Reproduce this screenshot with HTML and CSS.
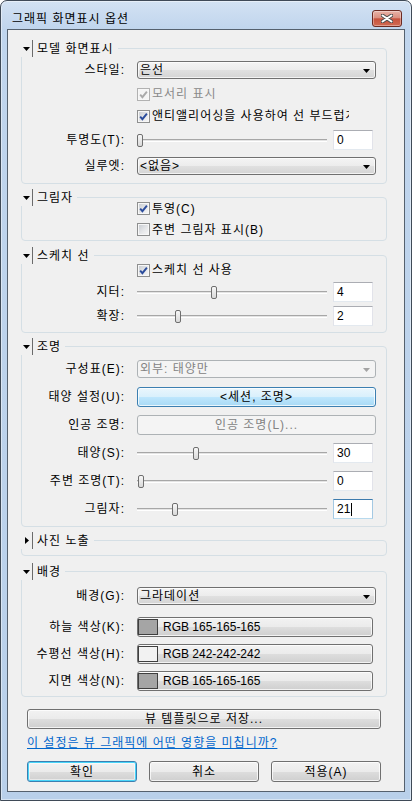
FILE: index.html
```html
<!DOCTYPE html>
<html lang="ko">
<head>
<meta charset="utf-8">
<title>그래픽 화면표시 옵션</title>
<link rel="stylesheet" href="styles.css">
</head>
<body>
<div class="window">
  <header class="titlebar">
    <span class="title">그래픽 화면표시 옵션</span>
    <span class="close"><svg width="12" height="9" viewBox="0 0 12 9"><path class="xo" d="M1.5 1.5L10.5 7.5M10.5 1.5L1.5 7.5"/><path class="xi" d="M1.5 1.5L10.5 7.5M10.5 1.5L1.5 7.5"/></svg></span>
  </header>
  <main class="client">
    <section class="group g1">
      <div class="ghead"><span class="tog"><svg width="7" height="4" viewBox="0 0 7 4"><path d="M0 0H7L3.5 4Z"/></svg></span><span class="gtitle">모델 화면표시</span></div>
      <div class="gbody">
        <div class="row tall"><span class="lbl">스타일:</span><div class="combo"><span>은선</span><svg class="arrow" width="7" height="4" viewBox="0 0 7 4"><path d="M0 0H7L3.5 4Z"/></svg></div></div>
        <div class="row"><div class="chk off"><span class="box"><svg width="11" height="11" viewBox="0 0 11 11"><path d="M2.2 5.6L4.4 8.2L8.9 2.6"/></svg></span><span>모서리 표시</span></div></div>
        <div class="row"><div class="chk"><span class="box"><svg width="11" height="11" viewBox="0 0 11 11"><path d="M2.2 5.6L4.4 8.2L8.9 2.6"/></svg></span><span class="clip">앤티앨리어싱을 사용하여 선 부드럽게</span></div></div>
        <div class="row tall"><span class="lbl">투명도(T):</span><div class="slider"><div class="track"><span class="thumb" style="left:0%"></span></div><span class="num">0</span></div></div>
        <div class="row tall"><span class="lbl">실루엣:</span><div class="combo"><span>&lt;없음&gt;</span><svg class="arrow" width="7" height="4" viewBox="0 0 7 4"><path d="M0 0H7L3.5 4Z"/></svg></div></div>
      </div>
    </section>

    <section class="group g2">
      <div class="ghead"><span class="tog"><svg width="7" height="4" viewBox="0 0 7 4"><path d="M0 0H7L3.5 4Z"/></svg></span><span class="gtitle">그림자</span></div>
      <div class="gbody">
        <div class="row h21"><div class="chk"><span class="box"><svg width="11" height="11" viewBox="0 0 11 11"><path d="M2.2 5.6L4.4 8.2L8.9 2.6"/></svg></span><span>투영(C)</span></div></div>
        <div class="row h21"><div class="chk"><span class="box"></span><span>주변 그림자 표시(B)</span></div></div>
      </div>
    </section>

    <section class="group g3">
      <div class="ghead"><span class="tog"><svg width="7" height="4" viewBox="0 0 7 4"><path d="M0 0H7L3.5 4Z"/></svg></span><span class="gtitle">스케치 선</span></div>
      <div class="gbody">
        <div class="row h20"><div class="chk"><span class="box"><svg width="11" height="11" viewBox="0 0 11 11"><path d="M2.2 5.6L4.4 8.2L8.9 2.6"/></svg></span><span>스케치 선 사용</span></div></div>
        <div class="row h24"><span class="lbl">지터:</span><div class="slider"><div class="track"><span class="thumb" style="left:39%"></span></div><span class="num">4</span></div></div>
        <div class="row h24"><span class="lbl">확장:</span><div class="slider"><div class="track"><span class="thumb" style="left:20%"></span></div><span class="num">2</span></div></div>
      </div>
    </section>

    <section class="group g4">
      <div class="ghead"><span class="tog"><svg width="7" height="4" viewBox="0 0 7 4"><path d="M0 0H7L3.5 4Z"/></svg></span><span class="gtitle">조명</span></div>
      <div class="gbody">
        <div class="row h28"><span class="lbl">구성표(E):</span><div class="combo off"><span>외부: 태양만</span><svg class="arrow" width="7" height="4" viewBox="0 0 7 4"><path d="M0 0H7L3.5 4Z"/></svg></div></div>
        <div class="row h28"><span class="lbl">태양 설정(U):</span><div class="btn hot">&lt;세션, 조명&gt;</div></div>
        <div class="row h28"><span class="lbl">인공 조명:</span><div class="btn off">인공 조명(L)...</div></div>
        <div class="row h28"><span class="lbl">태양(S):</span><div class="slider"><div class="track"><span class="thumb" style="left:29.5%"></span></div><span class="num">30</span></div></div>
        <div class="row h28"><span class="lbl">주변 조명(T):</span><div class="slider"><div class="track"><span class="thumb" style="left:0.5%"></span></div><span class="num">0</span></div></div>
        <div class="row h28"><span class="lbl">그림자:</span><div class="slider"><div class="track"><span class="thumb" style="left:18.3%"></span></div><span class="num focus">21<span class="caret"></span></span></div></div>
      </div>
    </section>

    <section class="group g5">
      <div class="ghead"><span class="tog"><svg width="4" height="7" viewBox="0 0 4 7"><path d="M0 0L4 3.5L0 7Z"/></svg></span><span class="gtitle">사진 노출</span></div>
      <div class="gbody"></div>
    </section>

    <section class="group g6">
      <div class="ghead"><span class="tog"><svg width="7" height="4" viewBox="0 0 7 4"><path d="M0 0H7L3.5 4Z"/></svg></span><span class="gtitle">배경</span></div>
      <div class="gbody">
        <div class="row tall"><span class="lbl">배경(G):</span><div class="combo"><span>그라데이션</span><svg class="arrow" width="7" height="4" viewBox="0 0 7 4"><path d="M0 0H7L3.5 4Z"/></svg></div></div>
        <div class="colors">
          <div class="row h27"><span class="lbl">하늘 색상(K):</span><div class="btn color"><span class="swatch" style="background:rgb(165,165,165)"></span><span class="rgb">RGB 165-165-165</span></div></div>
          <div class="row h27"><span class="lbl">수평선 색상(H):</span><div class="btn color"><span class="swatch" style="background:rgb(242,242,242)"></span><span class="rgb">RGB 242-242-242</span></div></div>
          <div class="row h27"><span class="lbl">지면 색상(N):</span><div class="btn color"><span class="swatch" style="background:rgb(165,165,165)"></span><span class="rgb">RGB 165-165-165</span></div></div>
        </div>
      </div>
    </section>

    <div class="btn save">뷰 템플릿으로 저장...</div>
    <div class="linkrow"><a class="link" href="#">이 설정은 뷰 그래픽에 어떤 영향을 미칩니까?</a></div>
    <div class="actions">
      <div class="btn def">확인</div>
      <div class="btn">취소</div>
      <div class="btn">적용(A)</div>
    </div>
  </main>
</div>
</body>
</html>
```

FILE: styles.css
```css
* { box-sizing: border-box; }
html, body { margin: 0; padding: 0; background: #fff; }
body {
  width: 412px;
  height: 801px;
  overflow: hidden;
  font: 12px/14px "Liberation Sans", "Noto Sans CJK KR", sans-serif;
  letter-spacing: 1px;
  color: #000;
}

.window {
  width: 412px;
  height: 801px;
  border: 1px solid #3f4a57;
  border-radius: 7px 7px 0 0;
  background: linear-gradient(180deg, #d3e2f3 0px, #c0d5ed 28px, #b9d0ea 100%);
  box-shadow: inset 0 0 0 1px rgba(255,255,255,0.45);
  padding: 0 6px 8px 6px;
  display: flex;
  flex-direction: column;
}

.titlebar {
  height: 28px;
  flex: none;
  display: flex;
  align-items: flex-start;
  padding: 9px 3px 0 5px;
}
.title { line-height: 18px; }
.close {
  margin-left: auto;
  width: 30px;
  height: 17px;
  border: 1px solid #6b2a22;
  border-radius: 3px;
  background: linear-gradient(180deg, #e8b3a8 0%, #db8f80 46%, #c6523d 52%, #d06a52 100%);
  box-shadow: inset 0 0 0 1px rgba(255,255,255,0.35);
  display: flex;
  align-items: center;
  justify-content: center;
}
.close svg { display: block; }
.close .xo { stroke: #4d4d4d; stroke-width: 3.8; stroke-linecap: round; fill: none; }
.close .xi { stroke: #fff; stroke-width: 2; stroke-linecap: round; fill: none; }

.client {
  flex: 1;
  background: #f0f0f0;
  border: 1px solid #55616e;
  padding: 18px 17px 0 13px;
  display: flex;
  flex-direction: column;
}

/* group boxes */
.group {
  border: 1px solid #d5dfe5;
  border-radius: 4px;
  padding: 0 10px 0 0;
  display: flex;
  flex-direction: column;
}
.group + .group { margin-top: 13px; }
.group.g3 { margin-top: 14px; }
.group.g6 { margin-top: 15px; }

.ghead {
  align-self: flex-start;
  height: 17px;
  margin: -9px 0 -8px -1px;
  background: #f0f0f0;
  display: flex;
  align-items: center;
  padding-right: 4px;
}
.tog {
  width: 12px;
  height: 17px;
  border-right: 1px solid #6b6b6b;
  display: flex;
  align-items: center;
  justify-content: center;
}
.tog svg { display: block; fill: #000; }
.gtitle { padding-left: 4px; white-space: nowrap; }

.gbody { display: flex; flex-direction: column; }
.g1 .gbody { padding: 8px 0 4px; }
.g2 .gbody { padding: 0; }
.g3 .gbody { padding: 4px 0 4px; }
.g4 .gbody { padding: 8px 0 3px; }
.g5 .gbody { height: 14px; }
.g6 .gbody { padding: 11px 0 2px; }
.colors { margin-top: 4px; display: flex; flex-direction: column; }

/* rows */
.row {
  display: grid;
  grid-template-columns: 102px 1fr;
  column-gap: 13px;
  align-items: center;
  height: 22px;
}
.row.tall { height: 26px; }
.row.h20 { height: 20px; }
.row.h21 { height: 21px; }
.row.h24 { height: 24px; }
.row.h27 { height: 27px; }
.row.h28 { height: 28px; }
.lbl { text-align: right; white-space: nowrap; margin-right: -1px; }

/* checkbox */
.chk {
  grid-column: 2;
  display: flex;
  align-items: center;
  gap: 2px;
  white-space: nowrap;
}
.box {
  width: 13px;
  height: 13px;
  flex: none;
  border: 1px solid #8e8f8f;
  background: linear-gradient(135deg, #c4c9cf 0%, #e6e7e9 55%, #f8f8f8 100%);
  box-shadow: inset 0 0 0 1px #f7f7f7;
  display: flex;
  align-items: center;
  justify-content: center;
}
.box svg { display: block; }
.box path { fill: none; stroke: #2b4c9c; stroke-width: 1.9; }
.chk.off { color: #8a8a8a; }
.chk.off .box { border-color: #b1b1b1; background: #f4f4f4; }
.chk.off .box path { stroke: #a9a9a9; }
.clip { max-width: 197px; overflow: hidden; }

/* combo */
.combo {
  height: 18px;
  border: 1px solid #707070;
  border-radius: 3px;
  background: linear-gradient(180deg, #f4f4f4 0%, #ececec 50%, #e0e0e0 52%, #d4d4d4 100%);
  box-shadow: inset 0 0 0 1px rgba(255,255,255,0.7);
  display: flex;
  align-items: center;
  justify-content: space-between;
  padding: 0 5px 0 2px;
  white-space: nowrap;
}
.combo .arrow { display: block; fill: #000; margin-top: 2px; }
.combo.off { border-color: #adb2b5; background: #f4f4f4; box-shadow: none; color: #838383; }
.combo.off .arrow { fill: #a3a3a3; }

/* buttons */
.btn {
  height: 20px;
  border: 1px solid #707070;
  border-radius: 3px;
  background: linear-gradient(180deg, #f2f2f2 0%, #ebebeb 50%, #dddddd 52%, #cfcfcf 100%);
  box-shadow: inset 0 0 0 1px rgba(255,255,255,0.75);
  display: flex;
  align-items: center;
  justify-content: center;
  white-space: nowrap;
}
.btn.hot {
  border-color: #3c7fb1;
  background: linear-gradient(180deg, #eaf6fd 0%, #d9f0fc 50%, #bee6fd 52%, #a7d9f5 100%);
}
.btn.off { border-color: #adb2b5; background: #f4f4f4; box-shadow: none; color: #838383; }
.btn.color { justify-content: flex-start; padding: 0; margin-right: 3px; }
.swatch { width: 20px; height: 16px; border: 1px solid #3f3f3f; margin-right: 5px; flex: none; }
.rgb { letter-spacing: 0; }

/* slider */
.slider { display: flex; align-items: center; gap: 6px; margin-right: 3px; }
.track {
  flex: 1;
  position: relative;
  height: 3px;
  background: #e4e4e4;
  border-top: 1px solid #a7a7a7;
  border-bottom: 1px solid #ffffff;
}
.thumb {
  position: absolute;
  top: -6px;
  width: 6px;
  height: 13px;
  border: 1px solid #6f6f6f;
  border-radius: 2px;
  background: linear-gradient(180deg, #f7f7f7, #d9d9d9);
}
.num {
  width: 40px;
  height: 20px;
  flex: none;
  border: 1px solid;
  border-color: #abadb3 #e2e3ea #e3e9ef #e2e3ea;
  background: #fff;
  padding: 0 3px;
  line-height: 18px;
  letter-spacing: 0;
  display: flex;
  align-items: center;
}
.num.focus { border-color: #3d7bad #a4c9e3 #b7d9ed #a4c9e3; }
.caret { display: inline-block; width: 1px; height: 13px; background: #000; margin-left: 1px; }

/* bottom */
.save { margin: 12px 6px 0; }
.linkrow { margin: 7px 6px 0; line-height: 14px; }
.link { color: #0066cc; text-decoration: underline; }
.actions { display: flex; justify-content: space-between; margin: 11px 6px 0; }
.actions .btn { width: 110px; height: 21px; }
.btn.def { border-color: #3c7fb1; box-shadow: inset 0 0 0 1px #48d5f9, inset 0 0 0 2px rgba(255,255,255,0.5); }
```
